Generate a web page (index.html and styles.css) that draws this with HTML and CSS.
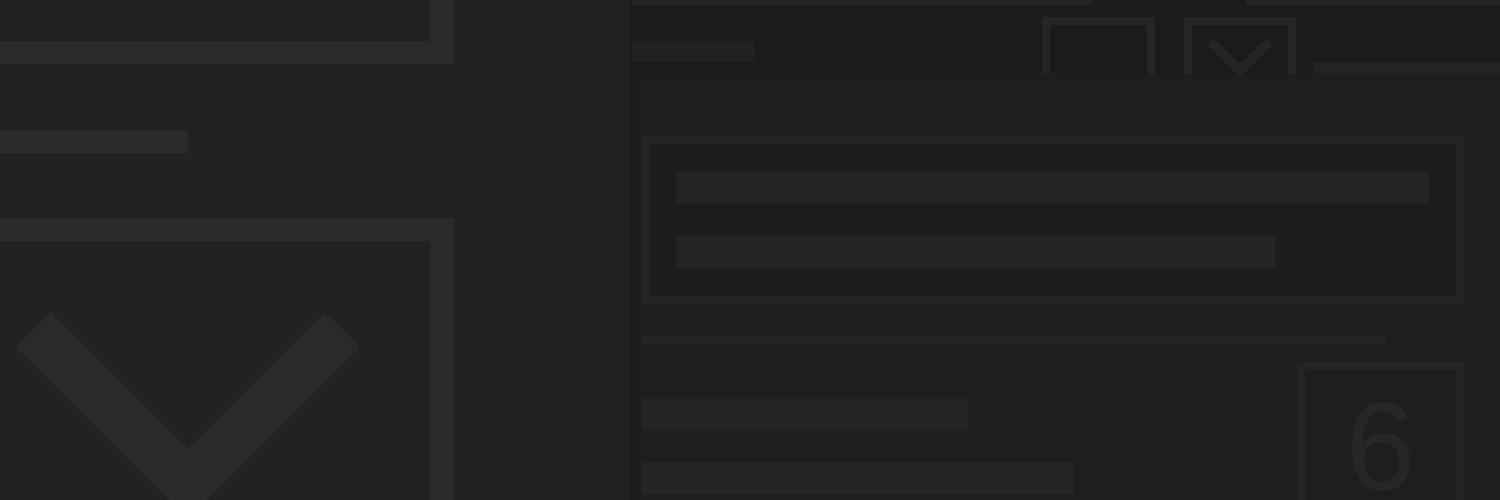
FILE: index.html
```html
<!DOCTYPE html>
<html lang="en">
<head>
  <meta charset="UTF-8" />
  <title>Wireframe</title>
  <link rel="stylesheet" href="styles.css">
</head>
<body>

  <div class="canvas">

    <div class="side">
      <div class="side-box top"></div>
      <div class="side-bar"></div>
      <div class="side-box bottom">
        <svg class="big-chevron" width="430" height="259" viewBox="0 0 430 259">
          <polyline points="33.5,88.5 188,243 342.5,88.5" />
        </svg>
      </div>
    </div>

    <div class="window">
      <div class="header">
        <div class="top-strip">
          <div class="strip-bar first"></div>
          <div class="strip-bar second"></div>
        </div>
        <div class="toolbar">
          <div class="title-bar"></div>
          <div class="tool-btn first"></div>
          <div class="tool-btn second">
            <svg width="96" height="49" viewBox="0 0 96 49">
              <polyline points="19,17 48,46 77,17" />
            </svg>
          </div>
          <div class="tool-line"></div>
        </div>
      </div>

      <div class="content">
        <div class="gutter"></div>
        <div class="main">
          <div class="card">
            <div class="line wide"></div>
            <div class="line mid"></div>
          </div>
          <div class="rule"></div>
          <div class="lower">
            <div class="lines">
              <div class="line short"></div>
              <div class="line long"></div>
            </div>
            <div class="badge">6</div>
          </div>
        </div>
      </div>
    </div>

  </div>

</body>
</html>
```

FILE: styles.css
```css
html, body { margin: 0; padding: 0; }
body { background: #1e1e1e; font-family: "Liberation Sans", Arial, sans-serif; }

.canvas {
  display: flex;
  width: 1500px;
  height: 500px;
  overflow: hidden;
}

/* left panel */
.side {
  width: 630px;
  flex-shrink: 0;
  background: #212121;
  display: flex;
  flex-direction: column;
}

.side-box {
  width: 430px;
  border: 0 solid #2a2a2a;
  border-right-width: 24px;
}

.side-box.top {
  height: 41px;
  border-bottom-width: 23px;
}

.side-bar {
  width: 188px;
  height: 23px;
  margin-top: 66px;
  background: #2a2a2a;
}

.side-box.bottom {
  margin-top: 65px;
  border-top-width: 23px;
  flex: 1;
}

.big-chevron { display: block; }
.big-chevron polyline {
  fill: none;
  stroke: #2a2a2a;
  stroke-width: 49.5;
  stroke-linejoin: miter;
}

/* right window */
.window {
  flex: 1;
  display: flex;
  flex-direction: column;
  background: #1b1b1b;
  min-height: 0;
}

.header {
  height: 74px;
  flex-shrink: 0;
  display: flex;
  flex-direction: column;
}

.top-strip {
  height: 5px;
  display: flex;
  justify-content: space-between;
  padding-left: 2px;
}

.strip-bar { background: #242424; }
.strip-bar.first { width: 460px; }
.strip-bar.second { width: 254px; }

.toolbar {
  flex: 1;
  display: flex;
  align-items: flex-end;
}

.title-bar {
  width: 123px;
  height: 21px;
  margin: 0 0 12px 2px;
  background: #222;
}

.tool-btn {
  height: 49px;
  border: 8px solid #252525;
  border-bottom: 0;
}
.tool-btn.first { width: 97px; margin-left: 287px; }
.tool-btn.second { width: 96px; margin-left: 29px; }
.tool-btn svg { display: block; }
.tool-btn polyline {
  fill: none;
  stroke: #252525;
  stroke-width: 9;
}

.tool-line {
  flex: 1;
  height: 12px;
  margin-left: 18px;
  background: #232323;
}

.content {
  flex: 1;
  min-height: 0;
  display: flex;
}

.gutter {
  width: 11px;
  background: #1b1b1b;
}

.main {
  flex: 1;
  background: #1e1e1e;
  padding-top: 62px;
}

.card {
  width: 780px;
  height: 125px;
  border: 8px solid #242424;
  background: #1d1d1d;
  padding: 27px 0 0 27px;
  display: flex;
  flex-direction: column;
  gap: 33px;
}

.line {
  height: 32px;
  background: #242424;
}
.line.wide { width: 753px; }
.line.mid { width: 599px; }
.line.short { width: 327px; }
.line.long { width: 433px; }

.rule {
  width: 744px;
  height: 9px;
  margin-top: 31px;
  background: #242424;
}

.lower {
  width: 823px;
  display: flex;
  justify-content: space-between;
  align-items: flex-start;
}

.lines {
  margin-top: 53px;
  display: flex;
  flex-direction: column;
  gap: 33px;
}

/* box runs on past the bottom edge, so no bottom border */
.badge {
  width: 151px;
  height: 103px;
  margin-top: 18px;
  border: 8px solid #242424;
  border-bottom: 0;
  padding-top: 27px;
  text-align: center;
  font-size: 126px;
  line-height: 100px;
  color: #262626;
}
```
